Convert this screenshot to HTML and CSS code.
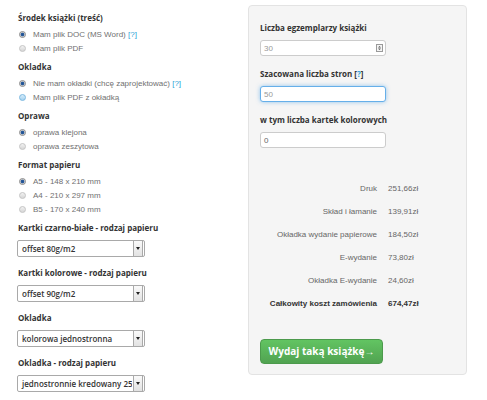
FILE: index.html
```html
<!DOCTYPE html>
<html>
<head>
<meta charset="utf-8">
<title>Kalkulator wydania książki</title>
<link rel="stylesheet" href="styles.css">
</head>
<body>

<div class="page">
  <div class="options">
    <div class="group_title first">Środek książki (treść)</div>
    <ul class="radios">
      <li><span class="radio checked"></span>Mam plik DOC (MS Word) <a href="#help">[?]</a></li>
      <li><span class="radio"></span>Mam plik PDF</li>
    </ul>

    <div class="group_title">Okladka</div>
    <ul class="radios">
      <li><span class="radio checked"></span>Nie mam okładki (chcę zaprojektować) <a href="#help">[?]</a></li>
      <li><span class="radio hover"></span>Mam plik PDF z okładką</li>
    </ul>

    <div class="group_title">Oprawa</div>
    <ul class="radios">
      <li><span class="radio checked"></span>oprawa klejona</li>
      <li><span class="radio"></span>oprawa zeszytowa</li>
    </ul>

    <div class="group_title">Format papieru</div>
    <ul class="radios">
      <li><span class="radio checked"></span>A5 - 148 x 210 mm</li>
      <li><span class="radio"></span>A4 - 210 x 297 mm</li>
      <li><span class="radio"></span>B5 - 170 x 240 mm</li>
    </ul>

    <div class="group_title">Kartki czarno-białe - rodzaj papieru</div>
    <div class="select"><span class="select_text">offset 80g/m2</span><span class="select_btn"></span></div>

    <div class="group_title after_select">Kartki kolorowe - rodzaj papieru</div>
    <div class="select"><span class="select_text">offset 90g/m2</span><span class="select_btn"></span></div>

    <div class="group_title after_select">Okladka</div>
    <div class="select"><span class="select_text">kolorowa jednostronna</span><span class="select_btn"></span></div>

    <div class="group_title after_select">Okladka - rodzaj papieru</div>
    <div class="select"><span class="select_text">jednostronnie kredowany 25</span><span class="select_btn"></span></div>
  </div>

  <div class="well">
    <div class="field_label">Liczba egzemplarzy książki</div>
    <div class="field">
      <span class="field_value">30</span>
      <svg class="spin" width="7" height="8" viewBox="0 0 7 8">
        <rect x="0.5" y="0.5" width="6" height="7" fill="#f4f4f4" stroke="#9a9a9a"/>
        <path d="M2 3.5 L3.5 2 L5 3.5 Z M2 4.5 L3.5 6 L5 4.5 Z" fill="#555"/>
      </svg>
    </div>

    <div class="field_label next">Szacowana liczba stron [<a href="#help">?</a>]</div>
    <div class="field focus"><span class="field_value">50</span></div>

    <div class="field_label next">w tym liczba kartek kolorowych</div>
    <div class="field"><span class="field_value dark">0</span></div>

    <div class="summary">
      <span class="sum_label">Druk</span><span>251,66zł</span>
      <span class="sum_label">Skład i łamanie</span><span>139,91zł</span>
      <span class="sum_label">Okładka wydanie papierowe</span><span>184,50zł</span>
      <span class="sum_label">E-wydanie</span><span>73,80zł</span>
      <span class="sum_label">Okładka E-wydanie</span><span>24,60zł</span>
      <span class="sum_label total">Całkowity koszt zamówienia</span><span class="total">674,47zł</span>
    </div>

    <a href="#order" class="btn_success">Wydaj taką książkę→</a>
  </div>
</div>

</body>
</html>
```

FILE: styles.css
```css
* {
    box-sizing: border-box;
}
body {
    margin: 0;
    font-family: "Liberation Sans", Arial, sans-serif;
    font-size: 8px;
    color: #333;
    background-color: white;
}
a {
    color: #2a9fd6;
    text-decoration: none;
}
.page {
    display: flex;
    align-items: flex-start;
}
.options {
    width: 248px;
    padding-left: 17px;
    padding-top: 12px;
}
.group_title {
    font-family: "Open Sans", "Liberation Sans", sans-serif;
    font-weight: bold;
    font-size: 8px;
    line-height: 12px;
    margin: 5px 0 0 1px;
    color: #333;
}
.group_title.first {
    margin-top: 0;
}
.group_title.after_select {
    margin-top: 10px;
}
.radios {
    list-style-type: none;
    margin: 4px 0 0 0;
    padding: 0;
}
.radios li {
    height: 14px;
    line-height: 14px;
    padding-left: 2px;
    color: #707070;
    white-space: nowrap;
}
.radio {
    display: inline-block;
    vertical-align: -1px;
    width: 7px;
    height: 7px;
    margin-right: 7px;
    border-radius: 50%;
    border: 1px solid #c4c4c4;
    background: linear-gradient(#f2f2f2, #d6d6d6);
}
.radio.checked {
    border-color: #8a8a8a;
    background: radial-gradient(circle, #1f4f8f 0, #2d5f9f 1.6px, #d8d8d8 2.2px, #bcbcbc 100%);
}
.radio.hover {
    border-color: #7ab8e0;
    background: linear-gradient(#d6ecfa, #a6d2ef);
}
.select {
    display: flex;
    width: 128px;
    height: 17px;
    margin-top: 6px;
    border: 1px solid #a9a9a9;
    border-radius: 2px;
    background-color: white;
    overflow: hidden;
}
.select_text {
    flex: 1;
    padding-left: 4px;
    font-family: "Open Sans", "Liberation Sans", sans-serif;
    font-weight: 600;
    font-size: 8px;
    line-height: 15px;
    white-space: nowrap;
    overflow: hidden;
    color: #333;
}
.select_btn {
    position: relative;
    width: 10px;
    margin: 0 1px 0 1px;
    border-left: 1px solid #a9a9a9;
    border-right: 1px solid #a9a9a9;
    background: linear-gradient(#fafafa, #e2e2e2);
}
.select_btn::after {
    content: "";
    position: absolute;
    left: 2px;
    top: 6px;
    border-left: 2px solid transparent;
    border-right: 2px solid transparent;
    border-top: 3px solid #222;
}
.well {
    width: 219px;
    margin-top: 5px;
    padding: 16px 11px 10px 11px;
    background-color: #f5f5f5;
    border: 1px solid #e3e3e3;
    border-radius: 4px;
}
.field_label {
    font-family: "Open Sans", "Liberation Sans", sans-serif;
    font-weight: bold;
    font-size: 8px;
    line-height: 12px;
    color: #333;
}
.field_label.next {
    margin-top: 12px;
}
.field {
    display: flex;
    align-items: center;
    justify-content: space-between;
    width: 126px;
    height: 16px;
    margin-top: 6px;
    padding: 0 2px 0 3px;
    background-color: white;
    border: 1px solid #ccc;
    border-radius: 3px;
}
.field.focus {
    border-color: #66afe9;
    box-shadow: 0 0 4px rgba(102, 175, 233, 0.7);
}
.field_value {
    color: #999;
}
.field_value.dark {
    color: #666;
}
.spin {
    display: block;
}
.summary {
    display: grid;
    grid-template-columns: 117px auto;
    column-gap: 11px;
    margin-top: 29px;
    line-height: 23px;
    color: #666;
}
.sum_label {
    text-align: right;
}
.total {
    font-weight: bold;
    color: #333;
}
.btn_success {
    display: block;
    width: 123px;
    height: 25px;
    margin-top: 24px;
    font-family: "Open Sans", "Liberation Sans", sans-serif;
    font-weight: bold;
    font-size: 10px;
    line-height: 23px;
    text-align: center;
    color: white;
    background: linear-gradient(#62c462, #51a351);
    border: 1px solid #4c9a4c;
    border-radius: 4px;
}
```
